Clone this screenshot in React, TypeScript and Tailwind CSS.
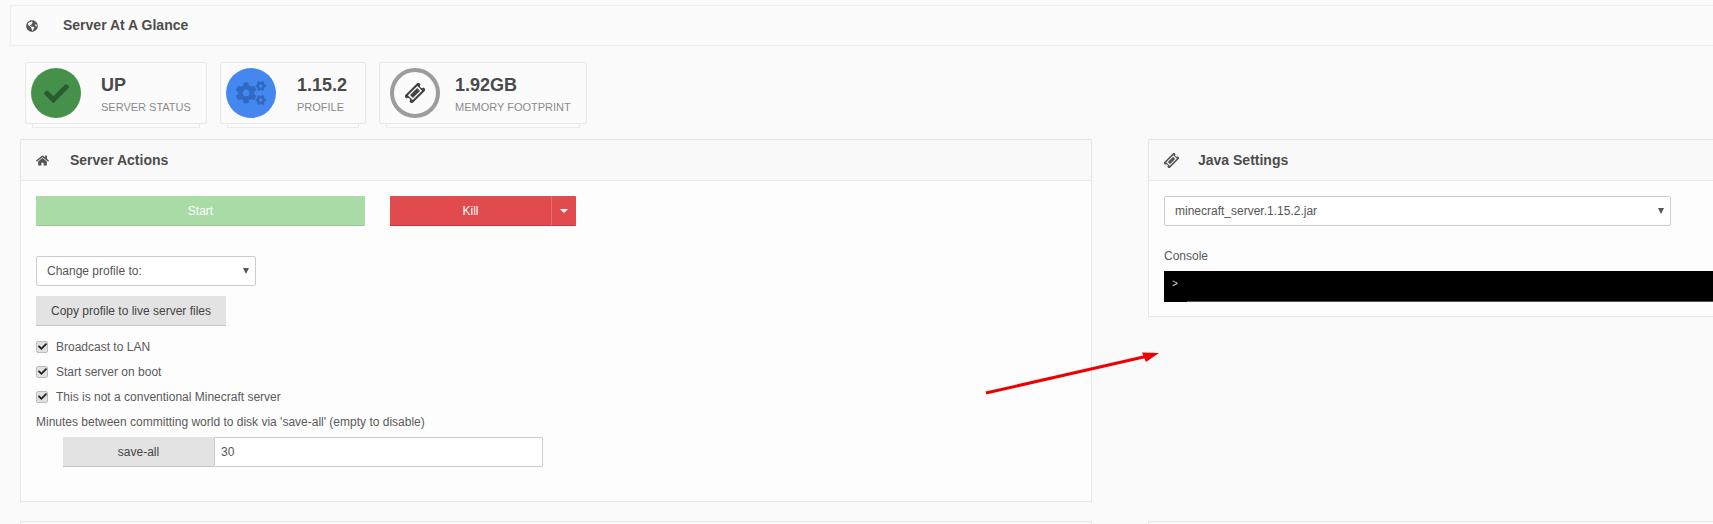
import React from "react";
import { FaCheck, FaCogs, FaGlobeAmericas, FaHome } from "react-icons/fa";

// diagonal ticket, the package only has a wider one
const Ticket = ({ className }: { className: string }) => (
  <svg viewBox="0 0 24 24" className={className}>
    <g transform="rotate(-45 12 12)" fill="currentColor">
      <path
        fillRule="evenodd"
        d="M0 5.5h24v4a2.5 2.5 0 0 0 0 5v4H0v-4a2.5 2.5 0 0 0 0-5zM4 8v8h16V8z"
      />
      <rect x="6" y="9.6" width="12" height="4.8" />
    </g>
  </svg>
);

const StatCard = ({
  width,
  icon,
  circle,
  title,
  label,
  pad = "pl-[5px]",
  textGap = "ml-[20px]",
}: {
  width: string;
  icon: React.ReactNode;
  circle: string;
  title: string;
  label: string;
  pad?: string;
  textGap?: string;
}) => (
  <div className={`relative h-[62px] ${width}`}>
    {/* stacked paper edge under the card */}
    <div className="absolute left-[7px] right-[7px] bottom-[-4px] h-[6px] border border-[#eaeaea] bg-[#fbfbfb]" />
    <div className={`relative flex h-full items-center rounded-[2px] border border-[#e8e8e8] bg-[#fbfbfb] ${pad}`}>
      <div className={`flex h-[50px] w-[50px] shrink-0 items-center justify-center rounded-full ${circle}`}>
        {icon}
      </div>
      <div className={`pt-[2px] ${textGap}`}>
        <div className="text-[18px] font-bold leading-[20px] text-[#4a4a4a]">{title}</div>
        <div className="mt-[5px] text-[11px] leading-[14px] text-[#8a8a8a]">{label}</div>
      </div>
    </div>
  </div>
);

const PanelHeader = ({ icon, title, gap }: { icon: React.ReactNode; title: string; gap: string }) => (
  <div className={`flex h-[41px] items-center border-b border-[#eaeaea] bg-[#f9f9f9] pl-[15px] ${gap}`}>
    {icon}
    <span className="text-[14px] font-bold text-[#4d4d4d]">{title}</span>
  </div>
);

const Check = ({ label }: { label: string }) => (
  <label className="flex h-[25px] items-center gap-[8px] text-[12px] text-[#5a5a5a]">
    <span className="flex h-[12px] w-[12px] items-center justify-center rounded-[2px] border border-[#bdbdbd] bg-[#e0e0e0]">
      <FaCheck className="h-[9px] w-[9px] text-[#222]" />
    </span>
    {label}
  </label>
);

const Caret = () => (
  <svg viewBox="0 0 8 8" className="h-[6px] w-[6px] fill-[#555]">
    <path d="M0 0h8L4 8z" />
  </svg>
);

export default function App() {
  return (
    <div className="relative h-[524px] w-[1713px] overflow-hidden bg-[#fafafa] font-['Liberation_Sans',Arial,sans-serif]">
      {/* page title bar */}
      <div className="ml-[10px] mt-[5px] flex h-[41px] items-center border border-r-0 border-[#eeeeee] bg-[#fbfbfb] pl-[15px]">
        <FaGlobeAmericas className="h-[12px] w-[12px] text-[#555]" />
        <span className="ml-[25px] text-[14px] font-bold text-[#4d4d4d]">Server At A Glance</span>
      </div>

      {/* stats */}
      <div className="ml-[25px] mt-[16px] flex gap-[13px]">
        <StatCard
          width="w-[182px]"
          circle="bg-[#45904a]"
          icon={<FaCheck className="h-[25px] w-[25px] text-[#2a5c2e]" />}
          title="UP"
          label="SERVER STATUS"
        />
        <StatCard
          width="w-[146px]"
          circle="bg-[#4487ee]"
          icon={<FaCogs className="h-[30px] w-[30px] text-[#2f69c4]" />}
          title="1.15.2"
          label="PROFILE"
          textGap="ml-[21px]"
        />
        <StatCard
          width="w-[208px]"
          circle="border-[4px] border-[#9c9c9c]"
          icon={<Ticket className="h-[20px] w-[20px] text-[#444]" />}
          title="1.92GB"
          label="MEMORY FOOTPRINT"
          pad="pl-[10px]"
          textGap="ml-[15px]"
        />
      </div>

      {/* panels */}
      <div className="ml-[20px] mt-[15px] flex gap-[56px]">
        <section className="h-[363px] w-[1072px] shrink-0 border border-[#e6e6e6] bg-[#fdfdfd]">
          <PanelHeader
            icon={<FaHome className="h-[13px] w-[13px] text-[#555]" />}
            title="Server Actions"
            gap="gap-[21px]"
          />
          <div className="pl-[15px] pt-[15px]">
            <div className="flex gap-[25px]">
              <button className="h-[30px] w-[329px] rounded-[1px] border-b border-[#98cc96] bg-[#a9dba6] text-[12px] text-white">
                Start
              </button>
              <div className="flex h-[30px] w-[186px] rounded-[1px] border-b border-[#c33a3f] bg-[#e14b4e] text-white">
                <button className="flex-1 text-[12px]">Kill</button>
                <span className="flex w-[25px] items-center justify-center border-l border-[#ea6b6e]">
                  <span className="h-0 w-0 border-x-[4px] border-t-[4px] border-x-transparent border-t-white" />
                </span>
              </div>
            </div>

            <div className="mt-[30px] flex h-[30px] w-[220px] items-center justify-between rounded-[2px] border border-[#cccccc] bg-white pl-[10px] pr-[6px] text-[12px] text-[#555]">
              Change profile to:
              <Caret />
            </div>
            <button className="mt-[10px] h-[30px] w-[190px] rounded-[1px] border-b border-[#c4c4c4] bg-[#e3e3e3] text-[12px] text-[#444]">
              Copy profile to live server files
            </button>

            <div className="mt-[8px]">
              <Check label="Broadcast to LAN" />
              <Check label="Start server on boot" />
              <Check label="This is not a conventional Minecraft server" />
            </div>
            <p className="mt-[5px] text-[12px] leading-[16px] text-[#5a5a5a]">
              Minutes between committing world to disk via 'save-all' (empty to disable)
            </p>
            <div className="ml-[27px] mt-[7px] flex h-[30px]">
              <span className="flex w-[151px] items-center justify-center border-b border-[#c4c4c4] bg-[#e3e3e3] text-[12px] text-[#444]">
                save-all
              </span>
              <input
                readOnly
                value="30"
                className="h-[30px] w-[329px] rounded-[1px] border border-[#cccccc] bg-white pl-[6px] text-[12px] text-[#555]"
              />
            </div>
          </div>
        </section>

        <section className="h-[178px] w-[620px] shrink-0 border border-[#e6e6e6] bg-[#fdfdfd]">
          <PanelHeader
            icon={<Ticket className="h-[15px] w-[15px] text-[#555]" />}
            title="Java Settings"
            gap="gap-[19px]"
          />
          <div className="pl-[15px] pt-[15px]">
            <div className="flex h-[30px] w-[507px] items-center justify-between rounded-[2px] border border-[#cccccc] bg-white pl-[10px] pr-[6px] text-[12px] text-[#555]">
              minecraft_server.1.15.2.jar
              <Caret />
            </div>
            <div className="mt-[22px] text-[12px] leading-[16px] text-[#5a5a5a]">Console</div>
            <div className="relative mt-[7px] h-[31px] w-full bg-black pl-[8px] pt-[7px] font-['Liberation_Mono',monospace] text-[10px] leading-[14px] text-[#dddddd]">
              &gt;
              <span className="absolute bottom-0 left-[23px] right-0 h-px bg-[#555]" />
            </div>
          </div>
        </section>
      </div>

      {/* next row of panels, cut off by the window */}
      <div className="ml-[20px] mt-[19px] flex gap-[56px]">
        <div className="h-[20px] w-[1072px] shrink-0 border border-[#e6e6e6] bg-[#fbfbfb]" />
        <div className="h-[20px] w-[620px] shrink-0 border border-[#e6e6e6] bg-[#fbfbfb]" />
      </div>

      {/* red annotation arrow drawn over the screenshot */}
      <svg className="pointer-events-none absolute left-[980px] top-[345px] h-[55px] w-[185px]" viewBox="0 0 185 55">
        <path d="M6 48 L168 11" stroke="#ee0000" strokeWidth="3" fill="none" />
        <path d="M179 8 L162 7.5 L166 17 z" fill="#ee0000" />
      </svg>
    </div>
  );
}
